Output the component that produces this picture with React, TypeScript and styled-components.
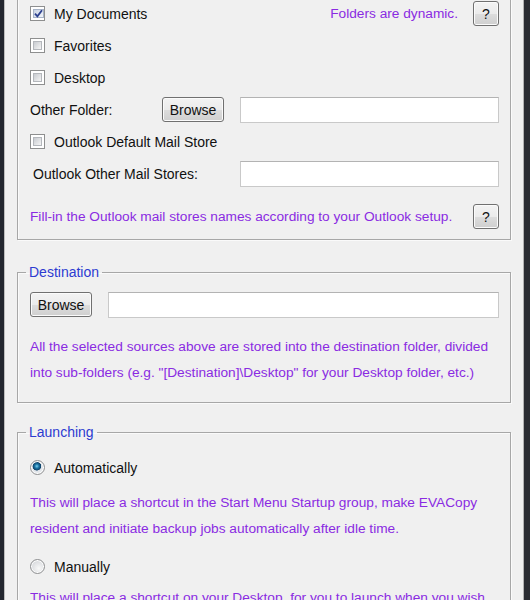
import React from "react";
import styled, { createGlobalStyle } from "styled-components";

const GlobalStyle = createGlobalStyle`
  html, body {
    margin: 0;
    padding: 0;
    background: #262933;
    overflow: hidden;
  }
  body {
    font-family: "Liberation Sans", Arial, sans-serif;
    font-size: 14px;
    color: #111;
  }
`;

const Window = styled.div`
  width: 530px;
  height: 600px;
  box-sizing: border-box;
  display: flex;
  border-left: 4px solid #23262f;
  border-right: 6px solid #2b2d33;
  overflow: hidden;
`;

const Client = styled.div`
  flex: 1;
  min-width: 0;
  background: #f0f0f0;
  border-left: 1px solid #bdbdbd;
  border-right: 1px solid #b3b3b3;
  padding: 0 12px;
`;

const Group = styled.fieldset<{ $top: number; $pad: string }>`
  margin: ${(p) => p.$top}px 0 0 0;
  padding: ${(p) => p.$pad};
  min-width: 0;
  border: 1px solid #a7a7a7;
  box-shadow: inset 1px 1px 0 #fafafa, 1px 1px 0 #fafafa;
`;

const Legend = styled.legend`
  color: #2d3bd0;
  font-size: 14px;
  line-height: 16px;
  padding: 0 3px;
  margin-left: -4px;
`;

const Stack = styled.div`
  display: flex;
  flex-direction: column;
  gap: 7px;
`;

const Row = styled.div<{ $mt?: number }>`
  display: flex;
  align-items: center;
  height: 25px;
  margin-top: ${(p) => p.$mt ?? 0}px;
`;

const TopRow = styled.div`
  display: flex;
  align-items: flex-start;
  gap: 16px;
`;

const Check = styled.label`
  display: flex;
  align-items: center;
  gap: 9px;
  white-space: nowrap;
`;

const Box = styled.span`
  width: 15px;
  height: 15px;
  box-sizing: border-box;
  border: 1px solid #8e8f8f;
  background: #fff;
  padding: 2px;
  display: flex;
  flex-shrink: 0;
`;

const BoxInner = styled.span<{ $checked?: boolean }>`
  flex: 1;
  display: flex;
  align-items: center;
  justify-content: center;
  border: 1px solid ${(p) => (p.$checked ? "#a7b3c7" : "#b4b7bc")};
  background: ${(p) =>
    p.$checked
      ? "linear-gradient(135deg, #c9d3e4, #f1f4f9)"
      : "linear-gradient(135deg, #c8cbd0, #f5f5f5)"};
`;

const Radio = styled.span<{ $on?: boolean }>`
  width: 15px;
  height: 15px;
  box-sizing: border-box;
  border-radius: 50%;
  border: 1px solid #8f9092;
  flex-shrink: 0;
  background: ${(p) =>
    p.$on
      ? "radial-gradient(circle at 45% 40%, #7fd0f0 0, #1c78a8 2px, #0d3f66 4px, #dfe3e8 4.6px, #f6f6f6 100%)"
      : "radial-gradient(circle at 60% 65%, #f8f8f8 0, #d9dbde 70%, #c9cbce 100%)"};
  box-shadow: inset 0 0 0 1px #fff;
`;

const Label = styled.span<{ $w: number; $indent?: number }>`
  width: ${(p) => p.$w}px;
  padding-left: ${(p) => p.$indent ?? 0}px;
  box-sizing: border-box;
  flex-shrink: 0;
  white-space: nowrap;
`;

const Button = styled.button<{ $w: number; $ml?: number }>`
  width: ${(p) => p.$w}px;
  height: 25px;
  padding: 0;
  margin-left: ${(p) => (p.$ml === undefined ? "0" : `${p.$ml}px`)};
  flex-shrink: 0;
  font-family: "Liberation Sans", Arial, sans-serif;
  font-size: 14px;
  color: #111;
  border: 1px solid #707070;
  border-radius: 3px;
  background: linear-gradient(#f3f3f3 0%, #ebebeb 50%, #dddddd 51%, #cfcfcf 100%);
  box-shadow: inset 0 0 0 1px #fbfbfb;
`;

const Field = styled.input<{ $ml?: number }>`
  flex: 1;
  min-width: 0;
  height: 26px;
  margin-left: ${(p) => p.$ml ?? 0}px;
  box-sizing: border-box;
  background: #fff;
  border: 1px solid #c9c9c9;
  border-top-color: #b3b3b3;
  outline: none;
`;

const Hint = styled.span<{ $right?: boolean }>`
  color: #8a2be2;
  font-size: 13.7px;
  white-space: nowrap;
  margin-left: ${(p) => (p.$right ? "auto" : "0")};
  margin-right: 15px;
`;

const Note = styled.div<{ $mt: number }>`
  color: #8a2be2;
  font-size: 13.7px;
  line-height: 26px;
  white-space: nowrap;
  margin-top: ${(p) => p.$mt}px;
`;

const Spacer = styled.span`
  flex: 1;
`;

function CheckBox({ label, checked }: { label: string; checked?: boolean }) {
  return (
    <Check>
      <Box>
        <BoxInner $checked={checked}>
          {checked && (
            <svg width="9" height="9" viewBox="0 0 9 9">
              <path
                d="M1 4.6 L3.4 7.4 L8 1.2"
                fill="none"
                stroke="#2b3f8f"
                strokeWidth="1.8"
              />
            </svg>
          )}
        </BoxInner>
      </Box>
      {label}
    </Check>
  );
}

function Option({ label, on }: { label: string; on?: boolean }) {
  return (
    <Check>
      <Radio $on={on} />
      {label}
    </Check>
  );
}

export default function App() {
  return (
    <>
      <GlobalStyle />
      <Window>
        <Client>
          <Group $top={-12} $pad="12px 11px 10px 12px">
            <Stack>
              <Row>
                <CheckBox label="My Documents" checked />
                <Hint $right>Folders are dynamic.</Hint>
                <Button $w={26}>?</Button>
              </Row>
              <Row>
                <CheckBox label="Favorites" />
              </Row>
              <Row>
                <CheckBox label="Desktop" />
              </Row>
              <Row>
                <Label $w={132}>Other Folder:</Label>
                <Button $w={62}>Browse</Button>
                <Field $ml={16} />
              </Row>
              <Row>
                <CheckBox label="Outlook Default Mail Store" />
              </Row>
              <Row>
                <Label $w={210} $indent={3}>
                  Outlook Other Mail Stores:
                </Label>
                <Field />
              </Row>
              <Row $mt={11}>
                <Hint>
                  Fill-in the Outlook mail stores names according to your Outlook setup.
                </Hint>
                <Spacer />
                <Button $w={26}>?</Button>
              </Row>
            </Stack>
          </Group>

          <Group $top={24} $pad="12px 11px 16px 12px">
            <Legend>Destination</Legend>
            <TopRow>
              <Button $w={62}>Browse</Button>
              <Field />
            </TopRow>
            <Note $mt={16}>
              All the selected sources above are stored into the destination folder, divided
              <br />
              into sub-folders (e.g. "[Destination]\Desktop" for your Desktop folder, etc.)
            </Note>
          </Group>

          <Group $top={21} $pad="15px 11px 16px 12px">
            <Legend>Launching</Legend>
            <Row>
              <Option label="Automatically" on />
            </Row>
            <Note $mt={10}>
              This will place a shortcut in the Start Menu Startup group, make EVACopy
              <br />
              resident and initiate backup jobs automatically after idle time.
            </Note>
            <Row $mt={12}>
              <Option label="Manually" />
            </Row>
            <Note $mt={6}>
              This will place a shortcut on your Desktop, for you to launch when you wish.
            </Note>
          </Group>
        </Client>
      </Window>
    </>
  );
}
